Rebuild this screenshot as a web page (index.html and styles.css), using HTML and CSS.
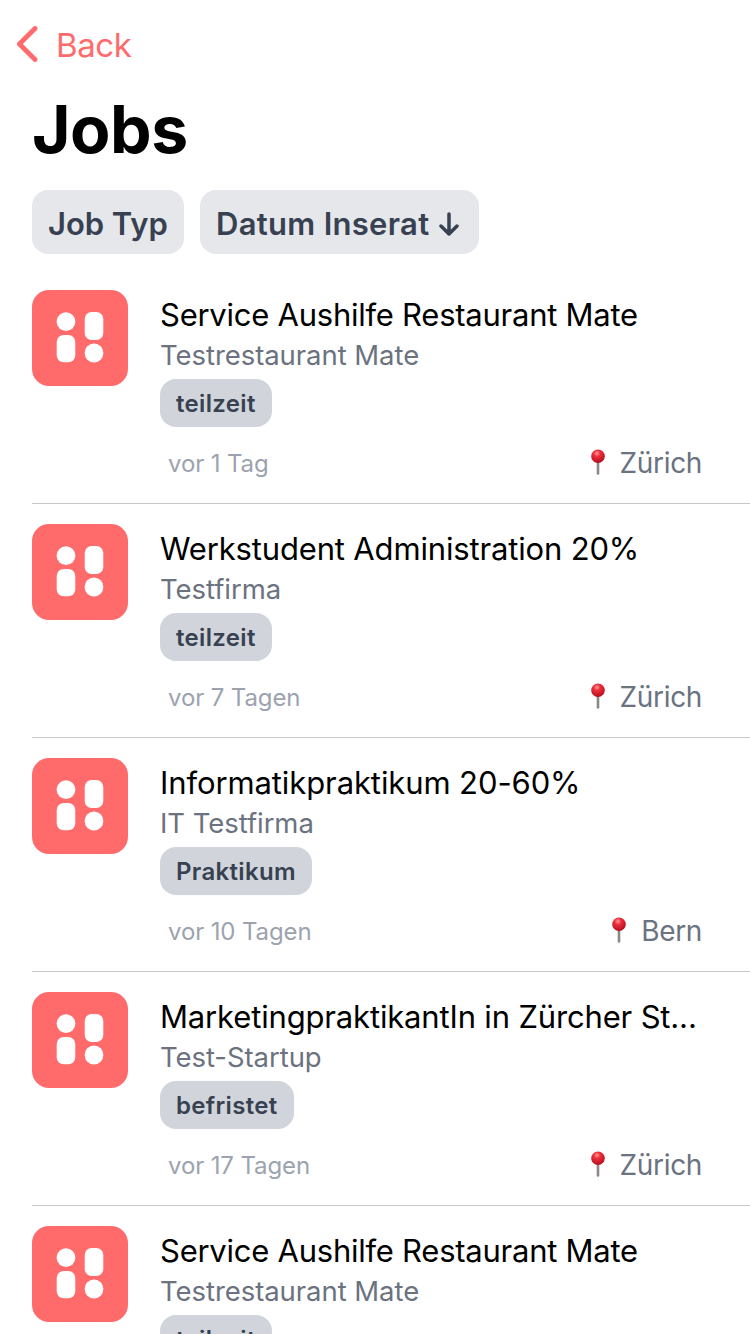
FILE: index.html
```html
<!DOCTYPE html>
<html lang="de">
<head>
<meta charset="utf-8">
<title>Jobs</title>
<link rel="stylesheet" href="styles.css">
</head>
<body>
<svg class="defs" width="0" height="0" aria-hidden="true">
  <defs>
    <radialGradient id="pin-head" cx="42%" cy="28%" r="70%"><stop offset="0" stop-color="#ff9a9c"/><stop offset=".35" stop-color="#ed2f3b"/><stop offset="1" stop-color="#b70d20"/></radialGradient>
  </defs>
  <symbol id="logo" viewBox="0 0 96 96">
    <circle cx="34" cy="31.6" r="9.4"/><rect x="52.7" y="22" width="18.6" height="28" rx="7"/>
    <rect x="24.7" y="45" width="18.6" height="27.3" rx="7"/><circle cx="62" cy="63" r="9.4"/>
  </symbol>
  <symbol id="pin" viewBox="0 0 16 26">
    <path d="M8 12V24.4" stroke="#8d8885" stroke-width="2.6" stroke-linecap="round"/>
    <circle cx="8" cy="7.3" r="6.8" fill="url(#pin-head)"/>
  </symbol>
</svg>
<main class="screen">
  <nav class="nav"><svg class="chevron" viewBox="0 0 22 36"><path d="M19 2.5L3.4 18L19 33.5"/></svg><a class="back">Back</a></nav>
  <h1 class="title">Jobs</h1>
  <div class="filters">
    <button class="filter type">Job Typ</button>
    <button class="filter date">Datum Inserat<svg class="arrow" viewBox="0 0 20 24"><path d="M10 2V22M2 14L10 22L18 14"/></svg></button>
  </div>
  <section class="list">
    <article class="job"><svg class="logo"><use href="#logo"/></svg><div class="body"><h2 class="name">Service Aushilfe Restaurant Mate</h2><p class="company">Testrestaurant Mate</p><span class="tag">teilzeit</span><div class="meta"><span>vor 1 Tag</span><span class="place"><svg class="pin"><use href="#pin"/></svg>Zürich</span></div></div></article>
    <article class="job"><svg class="logo"><use href="#logo"/></svg><div class="body"><h2 class="name loose">Werkstudent Administration 20%</h2><p class="company">Testfirma</p><span class="tag">teilzeit</span><div class="meta"><span>vor 7 Tagen</span><span class="place"><svg class="pin"><use href="#pin"/></svg>Zürich</span></div></div></article>
    <article class="job"><svg class="logo"><use href="#logo"/></svg><div class="body"><h2 class="name looser">Informatikpraktikum 20-60%</h2><p class="company">IT Testfirma</p><span class="tag">Praktikum</span><div class="meta"><span>vor 10 Tagen</span><span class="place"><svg class="pin"><use href="#pin"/></svg>Bern</span></div></div></article>
    <article class="job"><svg class="logo"><use href="#logo"/></svg><div class="body"><h2 class="name loose">MarketingpraktikantIn in Zürcher St...</h2><p class="company">Test-Startup</p><span class="tag">befristet</span><div class="meta"><span>vor 17 Tagen</span><span class="place"><svg class="pin"><use href="#pin"/></svg>Zürich</span></div></div></article>
    <article class="job"><svg class="logo"><use href="#logo"/></svg><div class="body"><h2 class="name">Service Aushilfe Restaurant Mate</h2><p class="company">Testrestaurant Mate</p><span class="tag">teilzeit</span></div></article>
  </section>
</main>
</body>
</html>
```
FILE: styles.css
```css
* { box-sizing: border-box; margin: 0; padding: 0; }
body { background: #fff; color: #000; font-family: Inter, "Liberation Sans", sans-serif; }
.defs { display: block; }
.screen { height: 1334px; overflow: hidden; display: flex; flex-direction: column; }
.nav { height: 88px; flex: none; display: flex; align-items: center; padding-left: 16px; gap: 18px; color: #ff6b6d; font-size: 33px; line-height: 40px; }
.back { padding-top: 2px; letter-spacing: -.4px; }
.chevron { width: 22px; height: 36px; fill: none; stroke: currentColor; stroke-width: 4.8; stroke-linecap: round; stroke-linejoin: round; }
.title { height: 102px; flex: none; padding-left: 32px; font-size: 66px; line-height: 82px; font-weight: 700; letter-spacing: -.5px; }
.filters { display: flex; gap: 16px; padding-left: 32px; height: 80px; flex: none; }
.filter { border: 0; height: 64px; padding: 3px 0 0 16px; border-radius: 16px; background: #e5e7eb; color: #374151; font: 600 31px/61px Inter, sans-serif; display: flex; align-items: center; white-space: nowrap; }
.type { width: 152px; letter-spacing: -.05px; }
.date { width: 279px; gap: 10px; letter-spacing: .3px; }
.arrow { width: 20px; height: 24px; fill: none; stroke: currentColor; stroke-width: 3.5; stroke-linecap: round; stroke-linejoin: round; }
.list { padding-left: 32px; }
.job { height: 234px; padding-top: 20px; display: flex; gap: 32px; border-bottom: 1px solid #c6c6c8; }
.logo { width: 96px; height: 96px; flex: none; border-radius: 17px; background: #ff6b6b; fill: #fff; }
.body { flex: 1; min-width: 0; padding: 5px 48px 0 0; white-space: nowrap; }
.name { font-size: 31px; line-height: 40px; font-weight: 400; letter-spacing: -.25px; }
.loose { letter-spacing: -.16px; }
.looser { letter-spacing: -.1px; }
.company { font-size: 27.5px; line-height: 41px; color: #6b7280; letter-spacing: -.06px; }
.tag { display: block; width: fit-content; height: 48px; margin-top: 3px; padding: 0 16px; border-radius: 16px; background: #d1d5db; color: #374151; font-size: 24px; line-height: 49px; font-weight: 600; letter-spacing: .33px; }
.meta { display: flex; justify-content: space-between; align-items: center; height: 40px; margin-top: 16px; padding-left: 8px; color: #9ca3af; font-size: 24px; letter-spacing: -.12px; }
.place { display: flex; align-items: center; gap: 14px; color: #6b7280; font-size: 28px; letter-spacing: -.35px; }
.pin { width: 16px; height: 26px; margin-bottom: 3px; }
```
